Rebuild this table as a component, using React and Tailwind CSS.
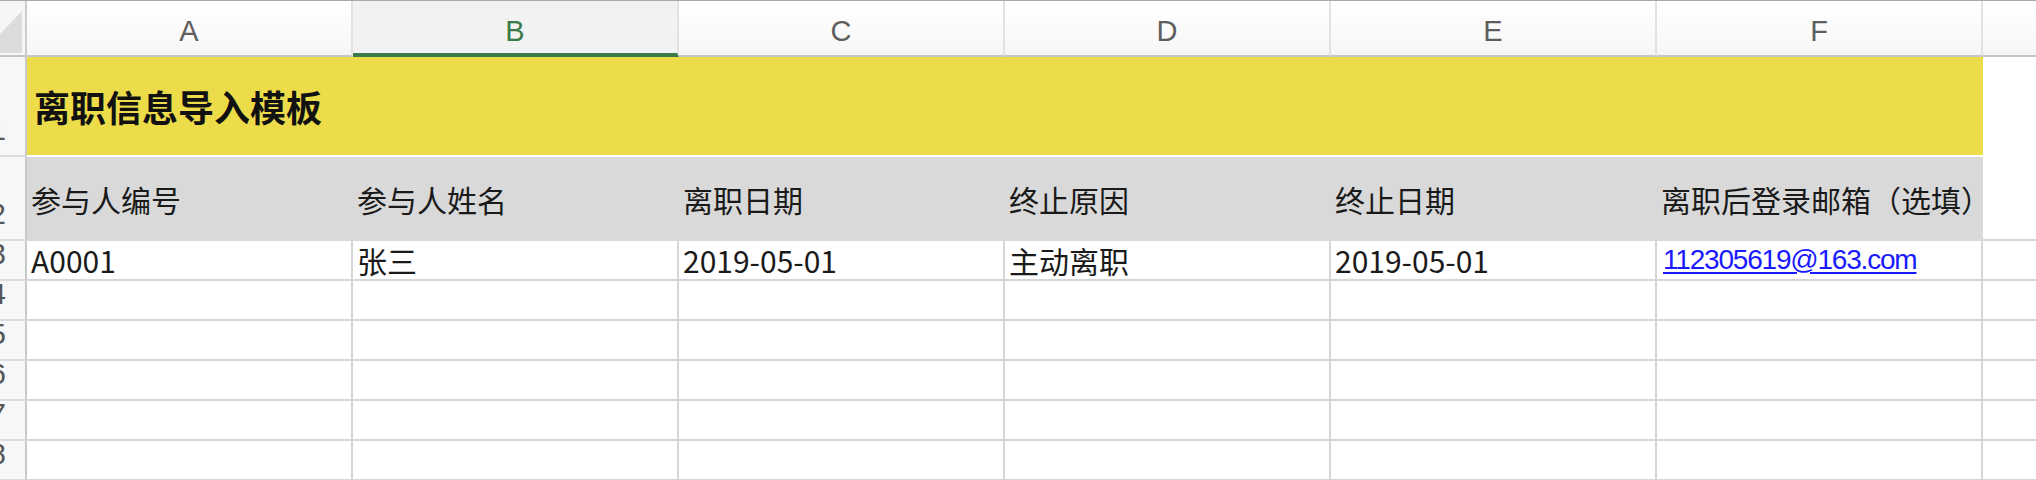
import React from 'react';

const COLS = ['A', 'B', 'C', 'D', 'E', 'F'];
const HEADERS = ['参与人编号', '参与人姓名', '离职日期', '终止原因', '终止日期', '离职后登录邮箱（选填）'];
const ROW3 = ['A0001', '张三', '2019-05-01', '主动离职', '2019-05-01'];

const RowNum = ({ n, h, last }) => (
    <div className={`${h} w-[27px] shrink-0 flex items-end justify-end pr-[19px] overflow-hidden bg-[#f7f7f7] border-r-2 border-r-[#c9c9c9] ${last ? '' : 'border-b-2 border-b-[#dcdcdc]'}`}>
        <span className="text-[30px] leading-[40px] text-[#555] font-['Liberation_Sans',sans-serif] -translate-y-[5px]">{n}</span>
    </div>
);

const App = () => {
    return (
        <div className="w-[2036px] h-[480px] overflow-hidden bg-white font-['Noto_Sans_CJK_SC',sans-serif] text-[#111]">
            {/* column letters */}
            <div className="flex h-[57px] border-t border-t-[#a9a9a9] bg-gradient-to-b from-white to-[#f6f6f6]">
                <div className="w-[27px] shrink-0 h-full bg-[#f6f6f6] border-r-2 border-r-[#cdcdcd] border-b-2 border-b-[#c6c6c6] overflow-hidden">
                    <svg width="25" height="54" viewBox="0 0 25 54">
                        <polygon points="0,33 22,10 22,52 0,52" fill="#dcdcdc" />
                    </svg>
                </div>
                {COLS.map(c => (
                    <div
                        key={c}
                        className={`w-[326px] shrink-0 h-full flex justify-center pt-[16px] border-r-2 border-r-[#e2e2e2] font-['Liberation_Sans',sans-serif] text-[29px] leading-none ${
                            c === 'B'
                                ? 'bg-[#f2f2f2] border-b-4 border-b-[#3a7a48] text-[#3a7a48]'
                                : 'border-b-2 border-b-[#c6c6c6] text-[#5e5e5e]'
                        }`}
                    >
                        {c}
                    </div>
                ))}
                <div className="flex-1 h-full border-b-2 border-b-[#c6c6c6]" />
            </div>

            {/* row 1: title */}
            <div className="flex">
                <RowNum n="1" h="h-[100px]" />
                <div className="w-[1956px] shrink-0 h-[100px] bg-[#ecdc4a] border-b-2 border-b-white flex items-center pl-[7px]">
                    <span className="text-[36px] font-bold">离职信息导入模板</span>
                </div>
                <div className="flex-1" />
            </div>

            {/* row 2: headers */}
            <div className="flex">
                <RowNum n="2" h="h-[84px]" />
                <div className="w-[1956px] shrink-0 h-[84px] bg-[#d9d9d9] flex">
                    {HEADERS.map((t, i) => (
                        <div key={i} className="w-[326px] shrink-0 flex items-center pl-[4px] text-[30px] whitespace-nowrap text-[#1a1a1a]">
                            {t}
                        </div>
                    ))}
                </div>
                <div className="flex-1 border-b-2 border-b-[#d6d6d6]" />
            </div>

            {/* data rows */}
            {[3, 4, 5, 6, 7, 8].map(n => (
                <div key={n} className="flex">
                    <RowNum n={n} h="h-[40px]" />
                    {COLS.map((c, i) => (
                        <div key={c} className="w-[326px] shrink-0 h-[40px] flex items-center pl-[4px] border-r-2 border-b-2 border-[#d6d6d6] text-[30px] whitespace-nowrap text-[#1a1a1a]">
                            {n === 3 && i < 5 && ROW3[i]}
                            {n === 3 && i === 5 && (
                                <span className="font-['Liberation_Sans',sans-serif] text-[28px] tracking-[-1.2px] text-[#1a1aff] underline underline-offset-[3px] pl-[2px]">
                                    112305619@163.com
                                </span>
                            )}
                        </div>
                    ))}
                    <div className="flex-1 h-[40px] border-b-2 border-[#d6d6d6]" />
                </div>
            ))}
        </div>
    );
};

export default App;
